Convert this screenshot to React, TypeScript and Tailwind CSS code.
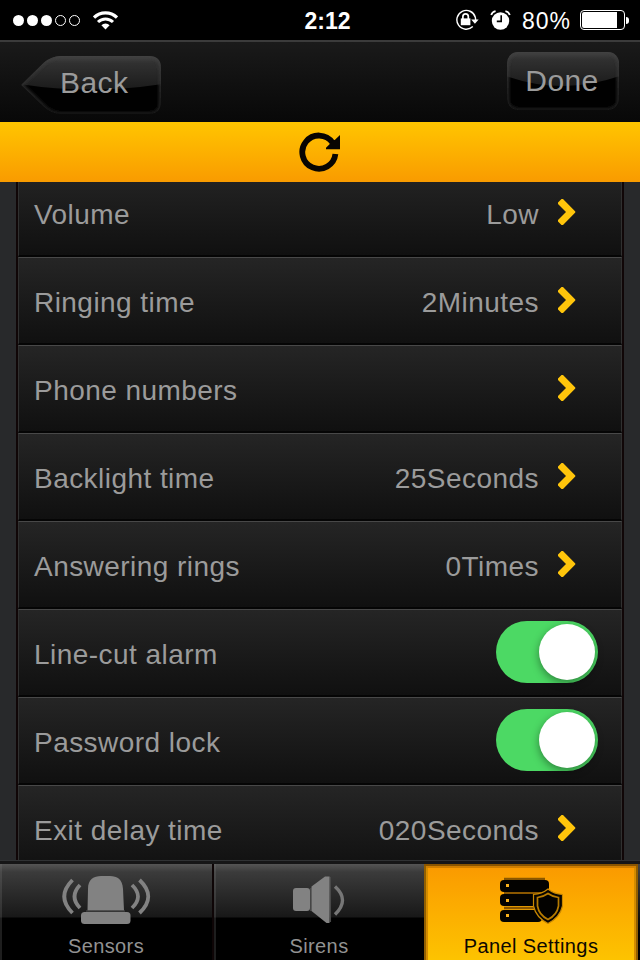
import type { ReactNode } from "react";

type Row = { label: string; value?: string; toggle?: boolean };

const rows: Row[] = [
  { label: "Volume", value: "Low" },
  { label: "Ringing time", value: "2Minutes" },
  { label: "Phone numbers", value: "" },
  { label: "Backlight time", value: "25Seconds" },
  { label: "Answering rings", value: "0Times" },
  { label: "Line-cut alarm", toggle: true },
  { label: "Password lock", toggle: true },
  { label: "Exit delay time", value: "020Seconds" },
];

function StatusBar() {
  return (
    <div className="relative flex h-10 shrink-0 items-center justify-between bg-black pr-[11px] pl-[13px] text-white">
      <div className="flex items-center">
        <div className="flex gap-[3px]">
          <span className="size-[11px] rounded-full bg-white" />
          <span className="size-[11px] rounded-full bg-white" />
          <span className="size-[11px] rounded-full bg-white" />
          <span className="size-[11px] rounded-full border border-white" />
          <span className="size-[11px] rounded-full border border-white" />
        </div>
        <svg className="ml-[13px]" width="25" height="19" viewBox="0 0 25 19" fill="none" stroke="white">
          <path d="M1 6.6a16.4 16.4 0 0 1 23 0" strokeWidth="3.2" />
          <path d="M5 11a10.6 10.6 0 0 1 15 0" strokeWidth="3" />
          <path d="M8.4 14.3a5.8 5.8 0 0 1 8.2 0L12.5 18.5Z" fill="white" stroke="none" />
        </svg>
      </div>
      <span className="absolute inset-x-0 top-0 pl-[15px] text-center text-[23px] leading-[42px] font-bold">2:12</span>
      <div className="flex items-center">
        <svg width="24" height="22" viewBox="0 0 24 22" fill="none" stroke="white" strokeWidth="1.4">
          <path d="M20.3 8.2A9.4 9.4 0 1 0 17.8 17.6M20.3 8.2l.5 3.8" />
          <path d="M16.2 10.5h7.4l-3.7 4.3Z" fill="white" stroke="none" />
          <rect x="5.8" y="9.4" width="9.6" height="6.8" fill="white" stroke="none" />
          <path d="M7.9 10V7.6a2.7 2.7 0 0 1 5.4 0V10" strokeWidth="1.7" />
        </svg>
        <svg className="ml-[11px]" width="21" height="20" viewBox="0 0 21 20">
          <circle cx="10.5" cy="11" r="8.7" fill="white" />
          <path d="M1.2 5A6 6 0 0 1 5.6 1.2M15.4 1.2A6 6 0 0 1 19.8 5" stroke="white" strokeWidth="1.8" fill="none" />
          <path d="M11.2 5.2v6.2H6.8" stroke="black" strokeWidth="1.6" fill="none" />
        </svg>
        <span className="ml-[11px] w-[58px] pt-[2px] text-[23px] leading-[40px] tracking-[0.9px]">80%</span>
        <div className="h-5 w-[45px] rounded-[4px] border border-white p-px">
          <div className="h-full w-[35px] rounded-l-[2px] bg-white" />
        </div>
        <div className="ml-[1px] h-[7px] w-[3px] rounded-r-full bg-white" />
      </div>
    </div>
  );
}

function NavBar() {
  return (
    <div className="flex h-[82px] shrink-0 items-start justify-between border-t-2 border-[#3b3b3b] bg-linear-to-b from-[#1a1a1a] to-[#080808] pr-[20px] pl-[20px] text-[30px] tracking-[0.4px] text-[#9b9b9b]">
      <button className="relative mt-[13px] h-[60px] w-[142px]">
        <svg className="absolute inset-0" width="142" height="60" viewBox="0 0 142 60">
          <defs>
            <linearGradient id="gloss" x1="0" y1="0" x2="0" y2="1">
              <stop offset="0" stopColor="#424242" />
              <stop offset=".25" stopColor="#303030" />
              <stop offset="1" stopColor="#1b1b1b" />
            </linearGradient>
            <linearGradient id="rim" x1="0" y1="0" x2="0" y2="1">
              <stop offset="0" stopColor="#404040" />
              <stop offset="1" stopColor="#1a1a1a" />
            </linearGradient>
            <clipPath id="arrow">
              <path d="M1 30 24 7.5Q32 1 40 1H129Q141 1 141 13V47Q141 59 129 59H40Q32 59 24 52Z" />
            </clipPath>
            <filter id="soft"><feGaussianBlur stdDeviation="1.6" /></filter>
          </defs>
          <g clipPath="url(#arrow)">
            <path d="M0 0H142V60H0Z" fill="#010101" />
            <path d="M0 0H142V29Q70 40 0 29Z" fill="url(#gloss)" />
            <path d="M1 30 24 7.5Q32 1 40 1H129Q141 1 141 13V47Q141 59 129 59H40Q32 59 24 52Z" fill="none" stroke="url(#rim)" strokeWidth="4" filter="url(#soft)" />
          </g>
        </svg>
        <span className="relative block pt-px pb-[5px] pl-[40px] text-left leading-[42px]">Back</span>
      </button>
      <button className="relative mt-[9px] h-[60px] w-[114px]">
        <svg className="absolute inset-0" width="114" height="60" viewBox="0 0 114 60">
          <defs>
            <clipPath id="rounded"><rect x="1" y="1" width="112" height="58" rx="11" /></clipPath>
          </defs>
          <g clipPath="url(#rounded)">
            <path d="M0 0H114V60H0Z" fill="#010101" />
            <path d="M0 0H114V25Q57 45 0 25Z" fill="url(#gloss)" />
            <rect x="1" y="1" width="112" height="58" rx="11" fill="none" stroke="url(#rim)" strokeWidth="4" filter="url(#soft)" />
          </g>
        </svg>
        <span className="relative block pt-[4px] pr-[2px] pb-[4px] text-center leading-[42px]">Done</span>
      </button>
    </div>
  );
}

function RefreshBar() {
  return (
    <div className="flex h-[60px] shrink-0 items-start justify-center bg-linear-to-b from-[#ffc500] to-[#f99b00] pt-[9px]">
      <svg width="42" height="42" viewBox="0 0 42 42">
        <path d="M33.5 11.6A16.6 16.6 0 1 0 36.4 23" fill="none" stroke="#080502" strokeWidth="5.8" />
        <path d="M41 4V18.3H27V16.8L30.8 13 33.6 9.8 36 8.7Z" fill="#080502" />
      </svg>
    </div>
  );
}

function SettingRow({ label, value, toggle }: Row) {
  return (
    <div className="flex h-[88px] shrink-0 items-center justify-between border-x border-t border-b-2 border-x-[#303030] border-t-[#484848] border-b-[#050505] bg-linear-to-b from-[#252525] to-[#101010] pr-[23px] pl-[15px] text-[28px] tracking-[0.45px] text-[#9b9b9b]">
      <span className="pt-[4px] leading-[36px]">{label}</span>
      {toggle ? (
        <div className="mb-[2px] flex h-[62px] w-[102px] items-center justify-end rounded-full bg-[#4cd964] pr-[3px]">
          <div className="size-[56px] rounded-full bg-white shadow-[0_3px_8px_rgba(0,0,0,0.4)]" />
        </div>
      ) : (
        <div className="flex items-center pr-[22px]">
          <span className="pt-[4px] leading-[36px]">{value}</span>
          <svg className="mb-px ml-[18px]" width="19" height="28" viewBox="0 0 19 28">
            <path d="M4.5 1H6L18.3 13.5V14.5L6 27H4.5L1 23.5V22L9 14 1 6V4.5Z" fill="#ffc50b" />
          </svg>
        </div>
      )}
    </div>
  );
}

function SensorsIcon() {
  return (
    <svg width="90" height="50" viewBox="0 0 90 50" fill="none" stroke="#828282">
      <path d="M26.5 36.5L27 15C27 5 33 2 40 2H49C56 2 61.5 5 62 15L63 36.5Z" fill="#828282" stroke="none" />
      <path d="M25 37H64" stroke="#505050" strokeWidth="1" />
      <rect x="20" y="38" width="49.5" height="12" rx="3.5" fill="#828282" stroke="none" />
      <path d="M11.5 6Q-5 22.5 11.5 39M19 11Q8 22.5 19 34M71 11Q83 22.5 71 34M78.5 6Q96 22.5 78.5 39" strokeWidth="3.8" />
    </svg>
  );
}

function SirensIcon() {
  return (
    <svg width="52" height="50" viewBox="0 0 52 50">
      <rect x="0" y="14" width="17" height="23" rx="3" fill="#828282" />
      <path d="M17.8 14V37M37.3 3V48" stroke="#484848" strokeWidth="1.5" />
      <path d="M18.5 12.5 32 2.5H36.5V49H33.5L18.5 37Z" fill="#828282" />
      <path d="M42 12.5Q57 26 42 40.5" fill="none" stroke="#767676" strokeWidth="3.4" />
    </svg>
  );
}

function PanelIcon() {
  return (
    <svg width="64" height="50" viewBox="0 0 64 50">
      <path d="M5 5H46M5 19H44M5 34H40" stroke="#8a5700" strokeWidth="2.4" />
      <g fill="#030200">
        <rect x="1" y="6" width="49" height="12" rx="4" />
        <rect x="1" y="20" width="42" height="12" rx="4" />
        <rect x="1" y="36" width="42" height="12" rx="4" />
      </g>
      <path d="M7 10h3v3H7ZM7 25h3v3H7ZM7 40h3v3H7Z" fill="#f9b11c" />
      <path d="M49 15Q55 20 63.5 20.5V32Q61 43.5 49 49.5Q37 43.5 34.5 32V20.5Q43 20 49 15Z" fill="#080500" stroke="#c98800" strokeWidth="1.2" />
      <path d="M49 19.5Q54 23 59.5 23.5V32Q58 41 49 45.5Q40 41 38.5 32V23.5Q44 23 49 19.5Z" fill="#030200" stroke="#b67b00" strokeWidth="1.7" />
    </svg>
  );
}

function Tab({ label, icon, width, active }: { label: string; icon: ReactNode; width: string; active?: boolean }) {
  const look = active
    ? "bg-linear-to-b from-[#fa9900] to-[#fdc300] text-[#0d0800] pt-[10px] shadow-[inset_0_2px_0_#8a5500,inset_2px_0_0_#925f00,inset_-2px_0_0_#925f00,inset_0_4px_0_#d07f00,inset_4px_0_0_#d48c00,inset_-4px_0_0_#d48c00]"
    : "shadow-[inset_2px_0_0_rgba(120,120,120,0.25)] bg-[linear-gradient(to_bottom,#555_0px,#3b3b3b_8px,#181818_53px,#000_54px)] text-[#929292] pt-[10px]";
  return (
    <div className={`${width} ${look} flex h-full shrink-0 flex-col items-center`}>
      <div className="flex h-[50px] items-start">{icon}</div>
      <span className="mt-[11px] text-[20px] leading-[22px] tracking-[0.4px] whitespace-nowrap">{label}</span>
    </div>
  );
}

export default function App() {
  return (
    <div className="flex h-[960px] w-[640px] flex-col overflow-hidden bg-[#28292b] font-['Liberation_Sans',Arial,sans-serif]">
      <StatusBar />
      <NavBar />
      <RefreshBar />
      <div className="h-[678px] shrink-0 overflow-hidden bg-[#28292b] px-4">
        <div className="-mt-[13px] flex flex-col border-x-2 border-[#100607]">
          {rows.map((row) => (
            <SettingRow key={row.label} {...row} />
          ))}
        </div>
      </div>
      <div className="h-[100px] shrink-0 border-t border-[#303234] bg-[#161617] pt-[3px]">
        <div className="flex h-24 overflow-hidden">
          <Tab width="w-[212px]" label="Sensors" icon={<SensorsIcon />} />
          <div className="w-[2px] shrink-0 bg-[#0e0506]" />
          <Tab width="w-[210px]" label="Sirens" icon={<SirensIcon />} />
          <Tab width="w-[214px]" label="Panel Settings" icon={<PanelIcon />} active />
          <div className="w-[2px] shrink-0 bg-linear-to-b from-[#444] to-black" />
        </div>
      </div>
    </div>
  );
}
